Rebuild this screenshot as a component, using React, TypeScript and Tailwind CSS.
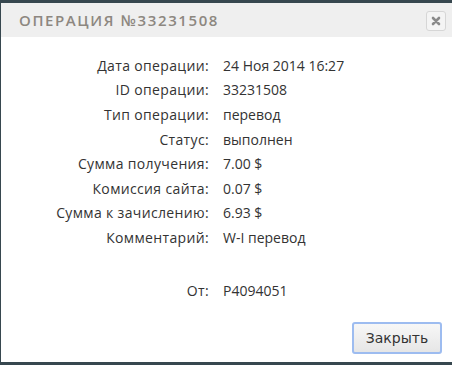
const ROWS: [string, string][] = [
  ["Дата операции:", "24 Ноя 2014 16:27"],
  ["ID операции:", "33231508"],
  ["Тип операции:", "перевод"],
  ["Статус:", "выполнен"],
  ["Сумма получения:", "7.00 $"],
  ["Комиссия сайта:", "0.07 $"],
  ["Сумма к зачислению:", "6.93 $"],
  ["Комментарий:", "W-I перевод"],
];

export default function App() {
  return (
    <div className="w-[452px] h-[365px] bg-[#37474f] pt-[3px] pb-[3px] pl-px overflow-hidden">
      <div className="h-full bg-white flex flex-col font-['Open_Sans',sans-serif]">
        {/* header */}
        <div className="h-[34px] bg-[#efefef] flex items-center justify-between pl-[18px] pr-[6px]">
          <span className="text-[15px] font-semibold tracking-[1.6px] text-[#8d8780] uppercase">
            Операция №33231508
          </span>
          <button className="w-[20px] h-[20px] mt-px rounded-[3px] border border-[#d6d6d6] bg-[#f4f4f4] flex items-center justify-center">
            <svg width="10" height="10" viewBox="0 0 10 10">
              <path d="M2 2L8 8M8 2L2 8" stroke="#8a8a8a" strokeWidth="2.6" strokeLinecap="round" />
            </svg>
          </button>
        </div>

        {/* body */}
        <div className="flex-1 pt-[16px] text-[14px] text-[#333]">
          {ROWS.map(([label, value]) => (
            <div key={label} className="flex h-[24.6px] items-center">
              <div className="w-[208px] text-right tracking-[0.35px]">{label}</div>
              <div className="pl-[14px]">{value}</div>
            </div>
          ))}
          <div className="flex h-[24.6px] items-center mt-[28px]">
            <div className="w-[208px] text-right tracking-[0.35px]">От:</div>
            <div className="pl-[14px]">P4094051</div>
          </div>
        </div>

        {/* footer */}
        <div className="flex justify-end pr-[10px] pb-[8px]">
          <button className="w-[90px] h-[32px] rounded-[3px] border-2 border-[#9dbcf0] bg-gradient-to-b from-[#f7f7f7] to-[#e6e6e6] text-[14px] text-[#333] font-['DejaVu_Sans',sans-serif]">
            Закрыть
          </button>
        </div>
      </div>
    </div>
  );
}
